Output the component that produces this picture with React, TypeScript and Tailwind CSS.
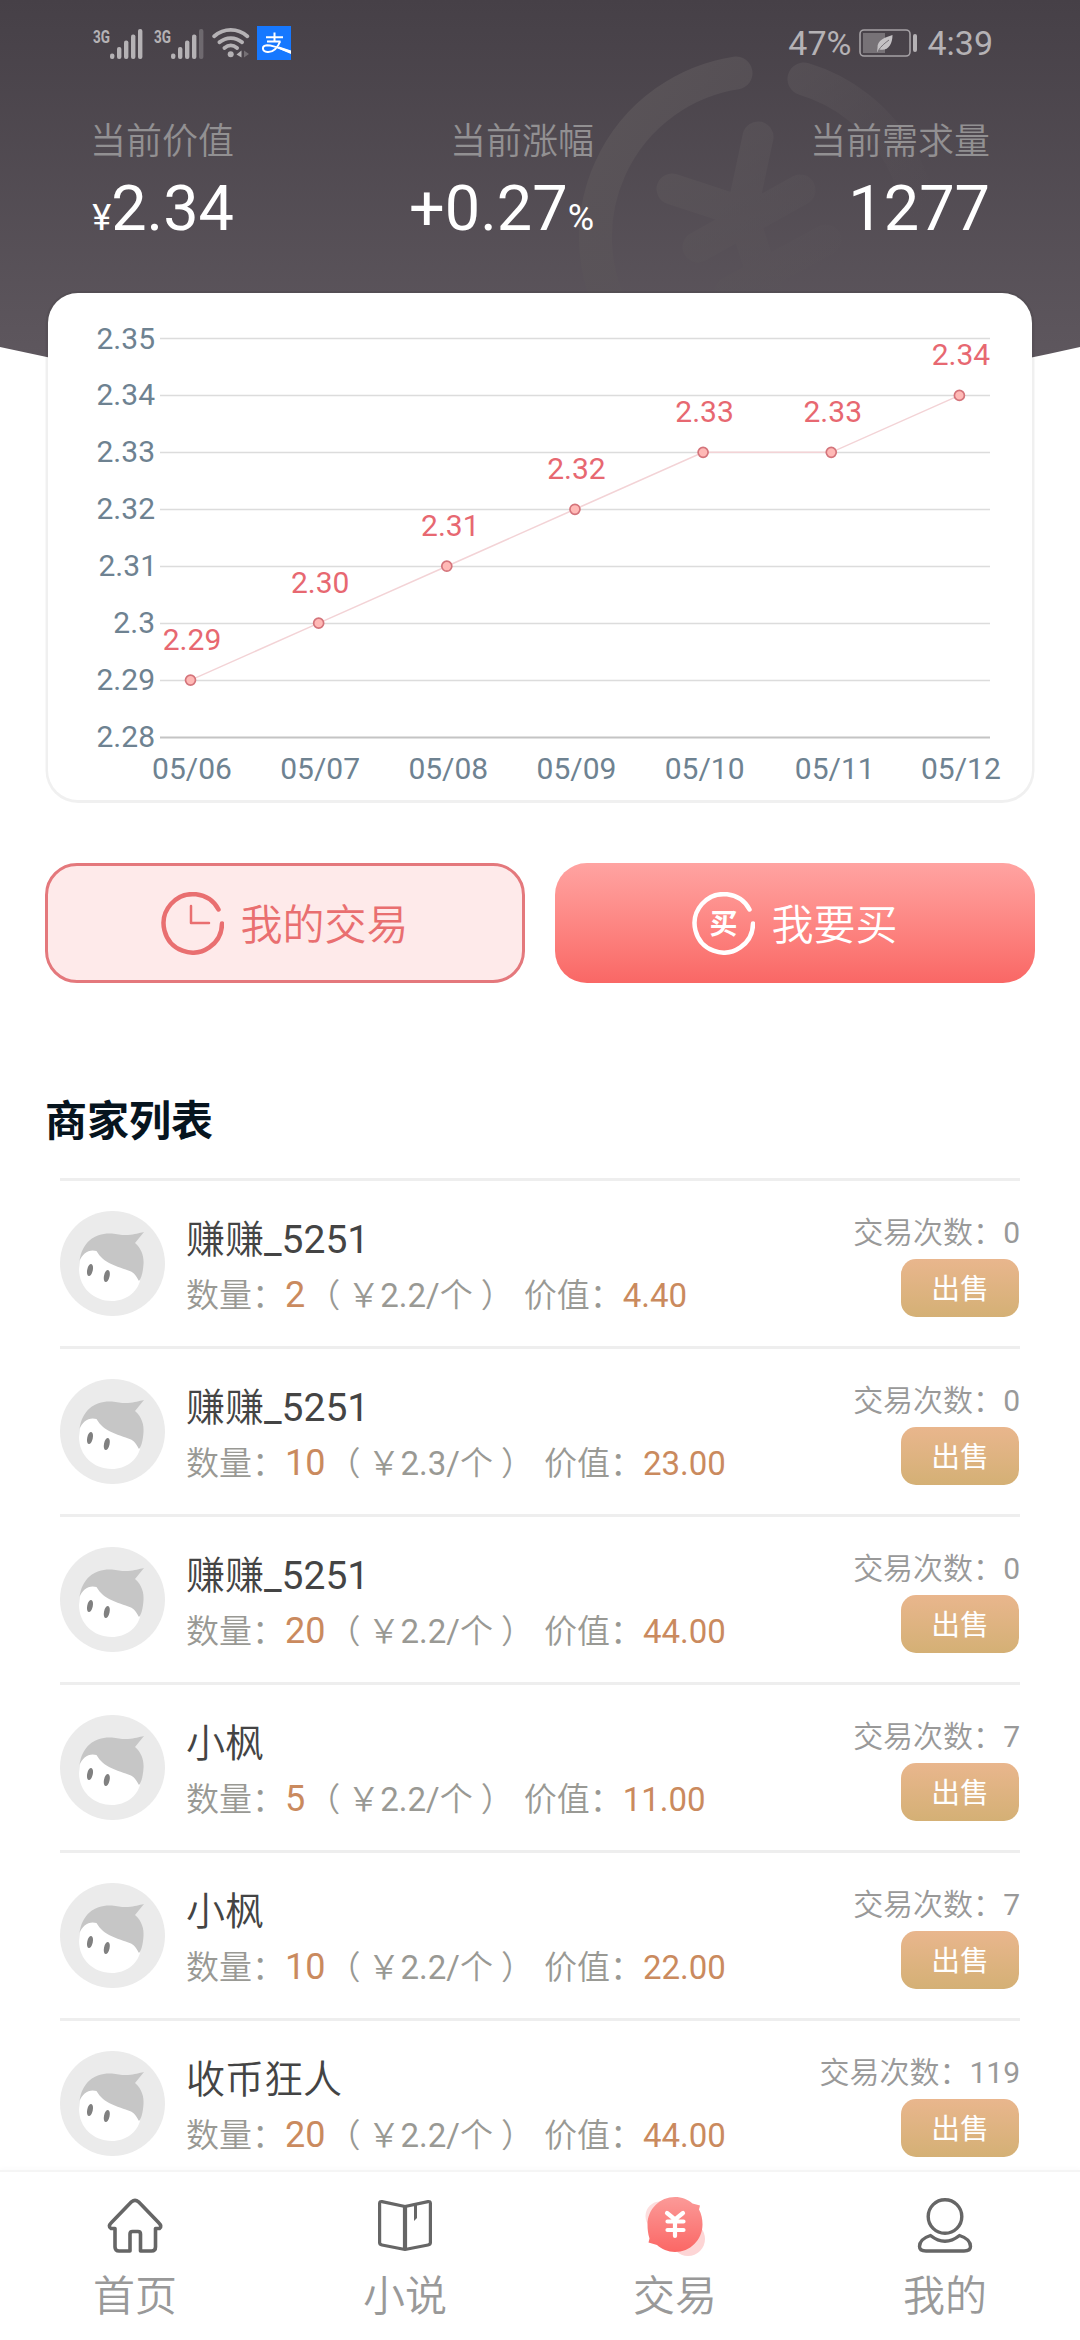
import React from 'react';

interface Merchant {
  name: string;
  amount: string;
  price: string;
  total: string;
  trades: number;
}

interface PricePoint {
  date: string;
  value: number;
}

const merchants: Merchant[] = [
  { name: '赚赚_5251', amount: '2', price: '2.2', total: '4.40', trades: 0 },
  { name: '赚赚_5251', amount: '10', price: '2.3', total: '23.00', trades: 0 },
  { name: '赚赚_5251', amount: '20', price: '2.2', total: '44.00', trades: 0 },
  { name: '小枫', amount: '5', price: '2.2', total: '11.00', trades: 7 },
  { name: '小枫', amount: '10', price: '2.2', total: '22.00', trades: 7 },
  { name: '收币狂人', amount: '20', price: '2.2', total: '44.00', trades: 119 }
];

const history: PricePoint[] = [
  { date: '05/06', value: 2.29 },
  { date: '05/07', value: 2.3 },
  { date: '05/08', value: 2.31 },
  { date: '05/09', value: 2.32 },
  { date: '05/10', value: 2.33 },
  { date: '05/11', value: 2.33 },
  { date: '05/12', value: 2.34 }
];

const ticks = ['2.35', '2.34', '2.33', '2.32', '2.31', '2.3', '2.29', '2.28'];

const SignalIcon: React.FC<{ weak?: boolean }> = ({ weak }) => (
  <svg className="w-[50px] h-[38px] mb-[5px]" viewBox="0 -6 50 38" fill="#b5b2b5">
    <text x="0" y="14.5" fontSize="19" fontWeight="700" textLength="17" lengthAdjust="spacingAndGlyphs">3G</text>
    <rect x="17" y="25.5" width="4.4" height="5.5" rx="2" />
    <rect x="24" y="19" width="4.4" height="12" rx="2" />
    <rect x="31" y="12.5" width="4.4" height="18.5" rx="2" />
    <rect x="38" y="6.5" width="4.4" height="24.5" rx="2" />
    <rect x="45" y="1" width="4.4" height="30" rx="2" fillOpacity={weak ? 0.35 : 1} />
  </svg>
);

const WifiIcon = () => (
  <svg className="w-[38px] h-[32px]" viewBox="0 0 38 32" fill="none" stroke="#b5b2b5" strokeWidth="3.8" strokeLinecap="round">
    <path d="M2.2 9.2C12 .8 25.5 .8 35.3 9.2" />
    <path d="M7.4 15.3C14 9.6 23.5 9.6 30.1 15.3" />
    <path d="M12.4 21C16.5 17.6 21 17.6 25.1 21" />
    <circle cx="18.7" cy="27.2" r="3" fill="#b5b2b5" stroke="none" />
    <path d="M29.5 23.5V30.5L24.5 27.5Z" fill="#b5b2b5" stroke="none" />
    <path d="M32 23.5L37 27L32 30.5Z" fill="#757075" stroke="none" />
  </svg>
);

const PayIcon = () => (
  <svg className="w-[34px] h-[34px]" viewBox="0 0 34 34">
    <rect width="34" height="34" fill="#1678ff" />
    <g fill="none" stroke="#fff" strokeWidth="2">
      <path d="M9 11.2H26M17.5 6.5V15.5M10 15.5H23.5" />
      <path d="M23 15.5C21 21.5 16 26.5 10.5 26C4.5 25.5 4.5 19.5 10 19.2C16 19.2 24 22.5 33.5 26" />
    </g>
    <path d="M22 20.5L34 24.5V28L21 22.5Z" fill="#fff" />
  </svg>
);

const BatteryIcon = () => (
  <svg className="w-[59px] h-[28px]" viewBox="0 0 59 28">
    <rect x="1" y="1" width="50" height="26" rx="4" fill="none" stroke="#a5a1a5" strokeWidth="1.6" />
    <rect x="4" y="4" width="22" height="20" fill="#777277" />
    <path d="M33.5 6C26 8.5 18 11 18.5 19L18 23L20.5 20.5C29 22.5 33.5 15 33.5 6Z" fill="#c4c1c4" />
    <path d="M19 22C22 17 26 14 30 11" stroke="#777277" strokeWidth="1" fill="none" />
    <rect x="54" y="5" width="4" height="18" rx="2" fill="#b5b2b5" />
  </svg>
);

const HeaderBackdrop = () => (
  <svg className="absolute left-0 top-0 w-[1080px] h-[440px]" viewBox="0 0 1080 440">
    <defs>
      <linearGradient id="sky" x1="0" y1="0" x2="0" y2="360" gradientUnits="userSpaceOnUse">
        <stop offset="0" stopColor="#464047" />
        <stop offset="1" stopColor="#5e575e" />
      </linearGradient>
      <linearGradient id="mark" x1="600" y1="80" x2="870" y2="280" gradientUnits="userSpaceOnUse">
        <stop offset="0" stopColor="#5a5458" />
        <stop offset="0.5" stopColor="#5a5459" stopOpacity="0.6" />
        <stop offset="1" stopColor="#5a5459" stopOpacity="0" />
      </linearGradient>
    </defs>
    <path d="M0 0H1080V347Q540 470 0 347Z" fill="url(#sky)" />
    <g fill="none" stroke="url(#mark)" strokeLinecap="round">
      <path d="M736 73A166 166 0 0 0 622 327" strokeWidth="33" />
      <path d="M804 79A164 164 0 0 1 915 280" strokeWidth="33" />
      <path d="M758 137L742 212L672 189M742 212L770 300M800 190L698 247M826 240L730 292" strokeWidth="31" strokeLinejoin="round" />
    </g>
  </svg>
);

const PriceChart = () => {
  const rowY = (i: number) => 45.5 + i * 56.93;
  const x = (i: number) => 142.5 + i * 128.15;
  const y = (v: number) => rowY((2.35 - v) * 100);
  // a trailing "1" is narrow, so its label sits slightly to the right
  const nudge = (label: string) => (label.endsWith('1') ? 2 : 0);

  return (
    <svg className="w-[984px] h-[507px]" viewBox="0 0 984 507" fontSize="30">
      {ticks.map((tick, i) => (
        <g key={tick}>
          <line
            x1="112"
            x2="942"
            y1={Math.floor(rowY(i)) + 0.5}
            y2={Math.floor(rowY(i)) + 0.5}
            stroke={i === 7 ? '#c4c4c4' : '#dcdcdc'}
            strokeWidth={i === 7 ? 2 : 1.4}
          />
          <text x={107 + nudge(tick)} y={rowY(i) + 10} textAnchor="end" fill="#6e8291">{tick}</text>
        </g>
      ))}
      <polyline
        points={history.map((p, i) => `${x(i)},${y(p.value)}`).join(' ')}
        fill="none"
        stroke="#f3d3d6"
        strokeWidth="1.5"
      />
      {history.map((p, i) => (
        <g key={p.date} textAnchor="middle">
          <circle cx={x(i)} cy={y(p.value)} r="5" fill="#ffb9b6" stroke="#d4747b" strokeWidth="1.7" />
          <text x={x(i) + 1.5 + nudge(p.value.toFixed(2))} y={y(p.value) - 30} fill="#e76871">{p.value.toFixed(2)}</text>
          <text x={x(i) + 1.5 + nudge(p.date)} y="485.5" fill="#6e8291">{p.date}</text>
        </g>
      ))}
    </svg>
  );
};

const Ring = () => (
  <path
    d="M57.5 17.5A29.2 29.2 0 1 0 61 31.5"
    fill="none"
    stroke="currentColor"
    strokeWidth="4.5"
    strokeLinecap="round"
  />
);

const ClockIcon = () => (
  <svg className="w-[63px] h-[63px]" viewBox="0 0 63 63">
    <Ring />
    <path d="M30 14V31H48" fill="none" stroke="currentColor" strokeWidth="2.5" strokeLinecap="round" strokeLinejoin="round" />
  </svg>
);

const BuyIcon = () => (
  <svg className="w-[63px] h-[63px]" viewBox="0 0 63 63">
    <Ring />
    <text x="31.5" y="42" fontSize="28" fontWeight="700" textAnchor="middle" fill="currentColor">买</text>
  </svg>
);

const Avatar = () => (
  <svg className="w-[105px] h-[105px] shrink-0" viewBox="0 0 105 105">
    <circle cx="52.5" cy="52.5" r="52.5" fill="#ebebeb" />
    <path d="M20 50C20 38 30 34 45 37L80 60V70C77 81 66 90 52 90C33 90 19 76 19 58Z" fill="#fff" />
    <path d="M19.5 50C22 31 35 21.5 52 22.5C58 23 62 24.5 68 24C75 23.5 79 22 84 21L75 32C82 38 84 46 83.5 53C83 61 81.5 67 79 70C77 67 75.5 63 71 60.5C57 55 44 53 36.5 40C29 37.5 22 43 19.5 50Z" fill="#c6c6c6" />
    <ellipse cx="30" cy="59" rx="2.8" ry="6.2" fill="#808080" transform="rotate(12 30 59)" />
    <ellipse cx="46.8" cy="65" rx="2.8" ry="6.2" fill="#808080" transform="rotate(12 46.8 65)" />
  </svg>
);

// Chinese runs are set in a lighter weight, digits and latin stay regular
const Cjk: React.FC<{ text: string }> = ({ text }) => (
  <>
    {text.split(/([\u3000-\u9fff\uff00-\uffef]+)/).map((part, i) =>
      i % 2 ? <span key={i} className="font-[350]">{part}</span> : part
    )}
  </>
);

const MerchantRow: React.FC<{ merchant: Merchant }> = ({ merchant }) => (
  <li className="flex h-[168px] border-t-[3px] border-[#eee] pt-[30px]">
    <Avatar />
    <div className="ml-[21px] pt-[3px]">
      <p className="text-[39px] leading-[52px] text-[#444]">
        <Cjk text={merchant.name} />
      </p>
      <p className="mt-[5px] text-[33px] leading-[50px] text-[#999994] whitespace-pre">
        <Cjk text="数量：" />
        <span className="text-[36px] leading-none text-[#ca8a5e]">{merchant.amount}</span>
        <span className="ml-[2px] mr-[7px] font-[350]">（</span>
        <Cjk text={`￥${merchant.price}/个`} />
        <span className="ml-[8px] mr-[10px] font-[350]">）</span>
        <Cjk text="价值：" />
        <span className="text-[#ca8a5e]">{merchant.total}</span>
      </p>
    </div>
    <div className="ml-auto flex flex-col items-end pt-[2px]">
      <p className="text-[30px] leading-[40px] text-[#999]">
        <Cjk text={`交易次数：${merchant.trades}`} />
      </p>
      <button className="mt-[6px] mr-px flex h-[58px] w-[118px] items-center justify-center rounded-[15px] bg-linear-to-b from-[#e9b68d] to-[#d4b075] pt-[3px] text-[28.8px] text-white">
        出售
      </button>
    </div>
  </li>
);

const HomeIcon = () => (
  <svg className="w-[60px] h-[60px]" viewBox="0 0 60 60" fill="none" stroke="#666" strokeWidth="3.6" strokeLinejoin="round">
    <path d="M26.5 5.8Q30 2.8 33.5 5.8L53.5 26.5Q57.5 30.5 54.5 32.5H50.5V51Q50.5 55 46.5 55H35.5V38Q35.5 35.5 33 35.5H27.5Q25 35.5 25 38V55H14Q10 55 10 51V32.5H6Q2.5 30.5 6.5 26.5Z" />
  </svg>
);

const BookIcon = () => (
  <svg className="w-[60px] h-[60px]" viewBox="0 0 60 60" fill="none" stroke="#666" strokeWidth="3.2" strokeLinejoin="round">
    <path d="M30 10.5L7 5.6Q4.6 5.2 4.6 7.5V46.5Q4.6 48.5 7 49L30 53.5L53 49Q55.4 48.5 55.4 46.5V7.5Q55.4 5.2 53 5.6Z" />
    <path d="M30 10V53" strokeWidth="4.2" />
    <path d="M39 9H42V22L39 25Z" fill="#666" stroke="none" />
  </svg>
);

const TradeIcon = () => (
  <svg className="w-[60px] h-[60px]" viewBox="0 0 60 60">
    <defs>
      <linearGradient id="coin" x1="0" y1="0" x2="0" y2="1">
        <stop offset="0" stopColor="#fb9a98" />
        <stop offset="1" stopColor="#fb6765" />
      </linearGradient>
    </defs>
    <circle cx="15" cy="20" r="14.5" fill="#fddede" />
    <circle cx="43" cy="43" r="17" fill="#fdd5d5" />
    <path d="M30 1C37 1 43 3.5 47.5 7.5L55 9.5L54 13.5C56.5 18 57.5 23 57.5 28.5C57.5 44 45 56 30 56C23 56 16.5 53 12 49L3.5 46.5L4.5 42.5C3 38 2.5 33 2.5 28.5C2.5 13 15 1 30 1Z" fill="url(#coin)" />
    <path d="M22 17L30 23.5L38 17M30 24V40M22.5 25.5H38.5M22.5 34H38.5" fill="none" stroke="#fff" strokeWidth="4.2" strokeLinecap="round" />
  </svg>
);

const UserIcon = () => (
  <svg className="w-[60px] h-[60px]" viewBox="0 0 60 60" fill="none" stroke="#666" strokeWidth="3.4" strokeLinejoin="round">
    <circle cx="30" cy="20.5" r="16.8" />
    <path d="M15.5 39.5Q4.5 43 4.5 50.5Q4.5 55 11 55H49Q55.5 55 55.5 50.5Q55.5 43 44.5 39.5Q30 51 15.5 39.5Z" />
  </svg>
);

const tabs = [
  { label: '首页', icon: <HomeIcon /> },
  { label: '小说', icon: <BookIcon /> },
  { label: '交易', icon: <TradeIcon /> },
  { label: '我的', icon: <UserIcon /> }
];

const App: React.FC = () => {
  return (
    <div className="relative flex h-[2340px] w-[1080px] flex-col overflow-hidden bg-white font-['Roboto','Noto_Sans_CJK_SC',sans-serif]">
      <HeaderBackdrop />

      <main className="relative flex-1 overflow-hidden">
        {/* Header */}
        <header className="h-[293px] text-white">
          <div className="flex h-[86px] items-center pl-[93px] pr-[87px] text-[34px] text-[#b5b2b5]">
            <SignalIcon />
            <div className="ml-[11px]"><SignalIcon weak /></div>
            <div className="ml-[8px]"><WifiIcon /></div>
            <div className="ml-[7px]"><PayIcon /></div>
            <span className="ml-auto mr-[8px] pt-px">47%</span>
            <BatteryIcon />
            <span className="ml-[9px] pt-px">4:39</span>
          </div>
          <div className="mt-[31px] flex px-[90px]">
            <div className="w-[144px] text-right">
              <p className="text-[36px] font-[350] leading-[50px] text-[#929092]">当前价值</p>
              <p className="mt-[7px] whitespace-nowrap text-[63px] leading-[70px]">
                <span className="text-[36px] leading-none">¥</span>2.34
              </p>
            </div>
            <div className="ml-[160px] w-[200px] text-right">
              <p className="text-[36px] font-[350] leading-[50px] text-[#929092]">当前涨幅</p>
              <p className="mt-[7px] whitespace-nowrap text-[63px] leading-[70px]">
                +0.27<span className="text-[36px] leading-none">%</span>
              </p>
            </div>
            <div className="ml-auto text-right">
              <p className="text-[36px] font-[350] leading-[50px] text-[#929092]">当前需求量</p>
              <p className="mt-[7px] text-[63px] leading-[70px]">1277</p>
            </div>
          </div>
        </header>

        {/* Price chart */}
        <section className="mx-[48px] h-[507px] rounded-[30px] bg-white shadow-[0_0.5px_0_2.5px_rgba(0,0,0,0.06)]">
          <PriceChart />
        </section>

        {/* Actions */}
        <div className="mx-[45px] mt-[63px] flex justify-between text-[42px] font-[350]">
          <button className="flex h-[120px] w-[480px] items-center justify-center gap-4 rounded-[32px] border-[3px] border-[#e4787c] bg-[#feeaea] text-[#e96f70]">
            <ClockIcon />
            <span className="pt-[5px]">我的交易</span>
          </button>
          <button className="flex h-[120px] w-[480px] items-center justify-center gap-4 rounded-[32px] bg-linear-to-b from-[#ffa3a1] to-[#f96765] text-white">
            <BuyIcon />
            <span className="pt-[5px]">我要买</span>
          </button>
        </div>

        {/* Merchant list */}
        <h2 className="ml-[45px] mt-[109px] text-[42px] font-bold leading-[60px] text-[#06141e]">商家列表</h2>
        <ul className="mx-[60px] mt-[26px]">
          {merchants.map((merchant, i) => (
            <MerchantRow key={i} merchant={merchant} />
          ))}
        </ul>
      </main>

      {/* Tab bar */}
      <nav className="relative flex h-[170px] border-t-2 border-[#f5f5f5] bg-white pt-[24px] shadow-[0_-2px_4px_rgba(0,0,0,0.02)]">
        {tabs.map((tab) => (
          <a key={tab.label} className="flex flex-1 flex-col items-center">
            {tab.icon}
            <span className="mt-[11px] text-[42px] font-[350] leading-[60px] text-[#999]">{tab.label}</span>
          </a>
        ))}
      </nav>
    </div>
  );
};

export default App;
